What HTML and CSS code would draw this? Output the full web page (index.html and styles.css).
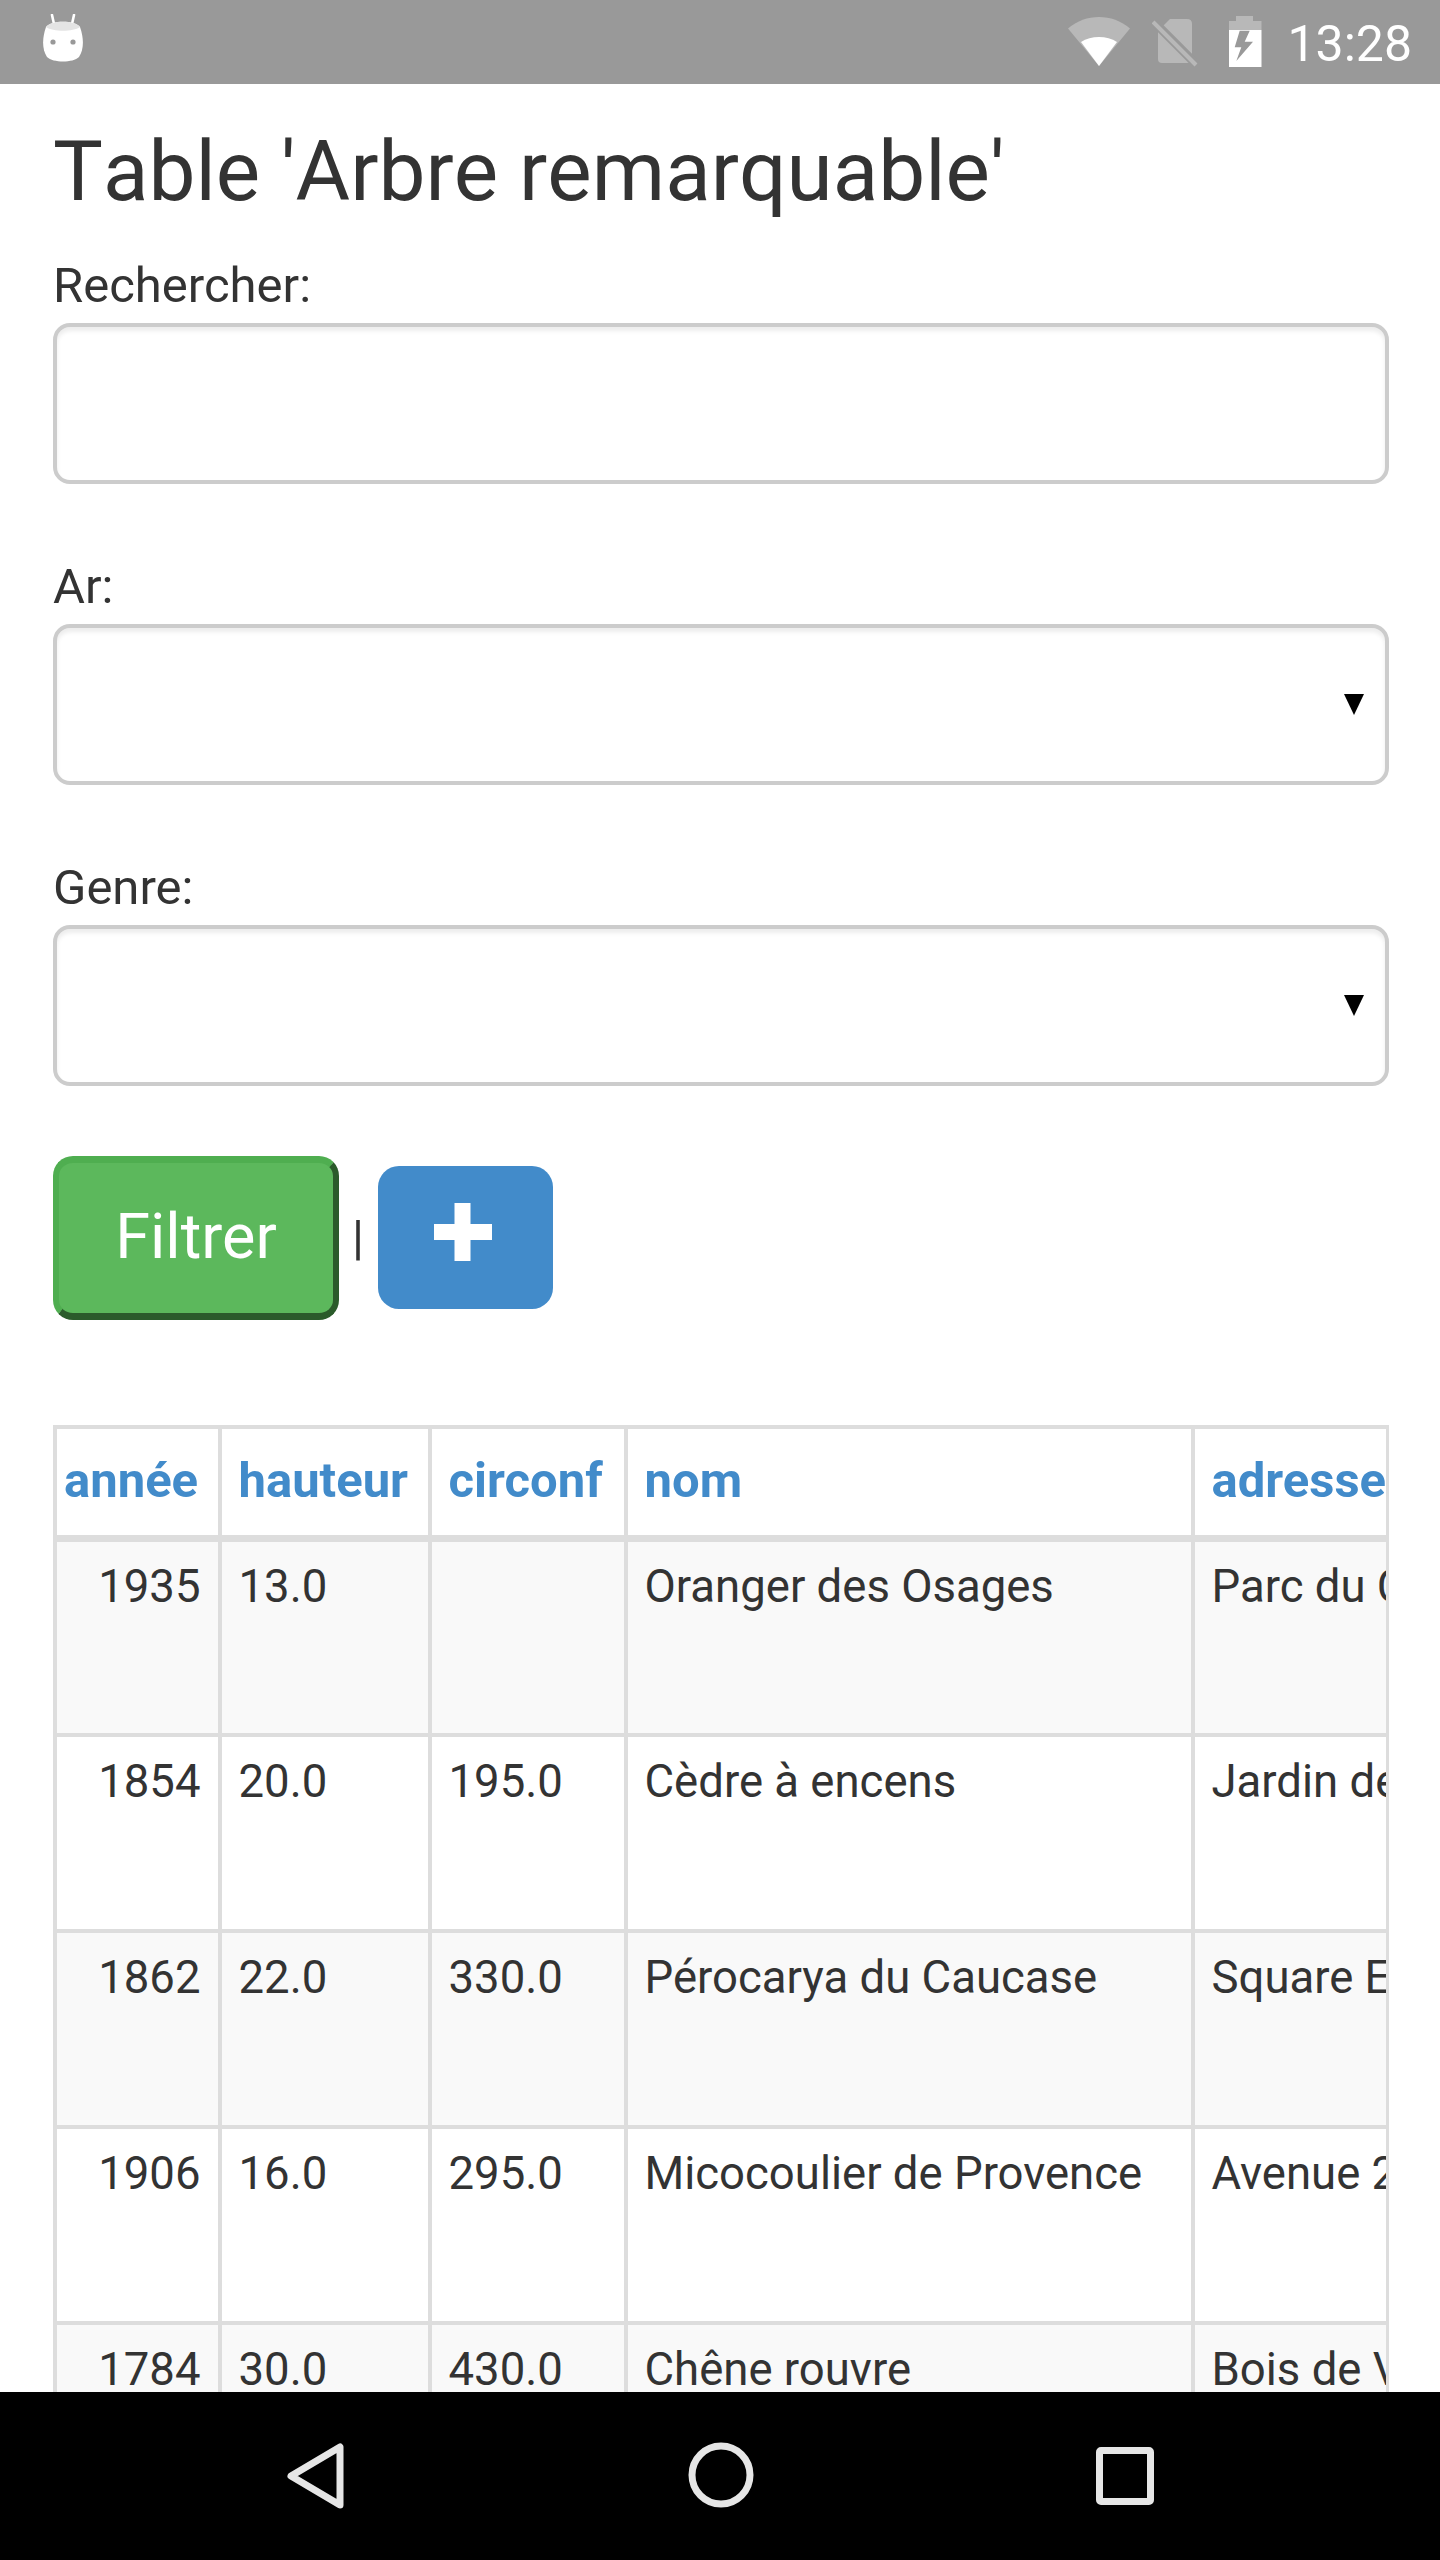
FILE: index.html
```html
<!DOCTYPE html>
<html lang="fr">
<head>
    <meta charset="UTF-8">
    <meta name="viewport" content="width=device-width, initial-scale=1.0">
    <title>Table 'Arbre remarquable'</title>
    <link rel="stylesheet" href="styles.css">
</head>
<body>
    <div class="screen">
        <div class="status-bar">
            <svg class="icon-bot" width="40" height="48" viewBox="0 0 40 48">
                <path d="M9 1l2 9M31 1l-2 9" stroke="#fff" stroke-width="2.6" stroke-linecap="round"/>
                <path d="M3 13C8 6 32 6 37 13C41 24 41 36 36 43C30 49 10 49 4 43C-1 36 -1 24 3 13Z" fill="#fff"/>
                <path d="M3 13C8 6 32 6 37 13C30 18 10 18 3 13Z" fill="#e4e4e4"/>
                <circle cx="10" cy="28" r="2.6" fill="#999"/>
                <circle cx="30" cy="28" r="2.6" fill="#999"/>
            </svg>
            <div class="status-right">
                <svg class="icon-wifi" width="62" height="49" viewBox="0 0 62 49">
                    <path d="M0 11.5C18 -3.800 44 -3.800 62 11.500L31 49Z" fill="#b8b8b8"/>
                    <path d="M13 25C23 18.300 39 18.300 49 25L31 49Z" fill="#fff"/>
                </svg>
                <svg class="icon-sim" width="46" height="48" viewBox="0 0 46 48">
                    <path d="M18 0H35Q40 0 40 5V40Q40 44 35 44H10Q6 44 6 40V12Z" fill="#b8b8b8"/>
                    <path d="M0 1L46 47" stroke="#999" stroke-width="9"/>
                    <path d="M1 3L44 46" stroke="#b8b8b8" stroke-width="4"/>
                </svg>
                <svg class="icon-battery" width="33" height="51" viewBox="0 0 33 51">
                    <path d="M7 0H24V5H32.500V14H0V5H7Z" fill="#b8b8b8"/>
                    <path d="M0 14H32.500V51H0Z" fill="#fff"/>
                    <path d="M10.700 14.700H20.700L15.700 25.700H24L7.300 45L12.300 31.300H5.700Z" fill="#999"/>
                </svg>
                <span class="clock">13:28</span>
            </div>
        </div>

        <div class="content">
            <h1 class="page-title">Table 'Arbre remarquable'</h1>

            <form class="filter-form">
                <div class="form-group">
                    <label for="q">Rechercher:</label>
                    <input type="text" id="q" class="form-control">
                </div>
                <div class="form-group">
                    <label for="ar">Ar:</label>
                    <div class="select-wrap">
                        <select id="ar" class="form-control"></select>
                    </div>
                </div>
                <div class="form-group">
                    <label for="genre">Genre:</label>
                    <div class="select-wrap">
                        <select id="genre" class="form-control"></select>
                    </div>
                </div>
                <div class="form-actions">
                    <button type="submit" class="btn-filter">Filtrer</button>
                    <span class="separator">|</span>
                    <a class="btn-add" href="#">
                        <svg width="58" height="58" viewBox="0 0 58 58">
                            <path d="M20.500 0H36.500V21H58V37H36.500V58H20.500V37H0V21H20.500Z" fill="#fff"/>
                        </svg>
                    </a>
                </div>
            </form>

            <div class="table-wrap">
                <table class="data-table">
                    <colgroup>
                        <col class="col-annee">
                        <col class="col-hauteur">
                        <col class="col-circonf">
                        <col class="col-nom">
                        <col class="col-adresse">
                    </colgroup>
                    <thead>
                        <tr>
                            <th class="th-annee">année</th>
                            <th>hauteur</th>
                            <th>circonf</th>
                            <th>nom</th>
                            <th>adresse</th>
                        </tr>
                    </thead>
                    <tbody>
                        <tr>
                            <td class="num">1935</td>
                            <td>13.0</td>
                            <td></td>
                            <td>Oranger des Osages</td>
                            <td>Parc du Champ de Mars</td>
                        </tr>
                        <tr>
                            <td class="num">1854</td>
                            <td>20.0</td>
                            <td>195.0</td>
                            <td>Cèdre à encens</td>
                            <td>Jardin des Plantes</td>
                        </tr>
                        <tr>
                            <td class="num">1862</td>
                            <td>22.0</td>
                            <td>330.0</td>
                            <td>Pérocarya du Caucase</td>
                            <td>Square Edouard VII</td>
                        </tr>
                        <tr>
                            <td class="num">1906</td>
                            <td>16.0</td>
                            <td>295.0</td>
                            <td>Micocoulier de Provence</td>
                            <td>Avenue 2 Septembre</td>
                        </tr>
                        <tr>
                            <td class="num">1784</td>
                            <td>30.0</td>
                            <td>430.0</td>
                            <td>Chêne rouvre</td>
                            <td>Bois de Vincennes</td>
                        </tr>
                    </tbody>
                </table>
            </div>
        </div>

        <div class="nav-bar">
            <svg width="60" height="68" viewBox="0 0 60 68">
                <path d="M54 5V63L5 34Z" fill="none" stroke="#e6e6e6" stroke-width="7" stroke-linejoin="round"/>
            </svg>
            <svg width="66" height="66" viewBox="0 0 66 66">
                <circle cx="33" cy="33" r="29" fill="none" stroke="#e6e6e6" stroke-width="7"/>
            </svg>
            <svg class="nav-square" width="58" height="58" viewBox="0 0 58 58">
                <rect x="3.500" y="3.500" width="51" height="51" rx="1.500" fill="none" stroke="#e6e6e6" stroke-width="7"/>
            </svg>
        </div>
    </div>
</body>
</html>
```

FILE: styles.css
```css
html, body {
    margin: 0;
    padding: 0;
}

body {
    font-family: 'Roboto', sans-serif;
    font-size: 49px;
    line-height: 70px;
    color: #333;
    background-color: #fff;
}

.screen {
    display: flex;
    flex-direction: column;
    height: 2560px;
    overflow: hidden;
}

/* status bar */
.status-bar {
    flex: none;
    height: 84px;
    background-color: #999;
    display: flex;
    align-items: flex-start;
    justify-content: space-between;
    padding: 0 28px 0 43px;
}

.icon-bot {
    margin-top: 14px;
}

.status-right {
    display: flex;
    align-items: flex-start;
}

.icon-wifi {
    margin-top: 17px;
}

.icon-sim {
    margin-top: 19px;
    margin-left: 22px;
}

.icon-battery {
    margin-top: 16px;
    margin-left: 31px;
}

.clock {
    margin-top: 9px;
    margin-left: 25px;
    color: #fff;
    font-size: 50px;
    line-height: 70px;
}

/* page */
.content {
    flex: 1;
    min-height: 0;
    padding: 0 51px 0 53px;
    overflow: hidden;
}

.page-title {
    margin: 41px 0 0;
    font-size: 83.7px;
    line-height: 92px;
    font-weight: 400;
    font-kerning: none;
}

.filter-form {
    margin-top: 33px;
}

.form-group {
    margin-bottom: 67.5px;
}

.form-group label {
    display: block;
    height: 71px;
    line-height: 71px;
    margin-bottom: 2px;
}

.form-control {
    display: block;
    box-sizing: border-box;
    width: 100%;
    height: 160.5px;
    margin: 0;
    padding: 0 42px;
    font-family: inherit;
    font-size: 49px;
    color: #555;
    background-color: #fff;
    border: 4px solid #ccc;
    border-radius: 17px;
    box-shadow: inset 0 4px 4px rgba(0, 0, 0, 0.075);
    appearance: none;
}

.select-wrap {
    position: relative;
}

.select-wrap::after {
    content: "";
    position: absolute;
    top: 70px;
    right: 25px;
    border-style: solid;
    border-width: 21px 10.5px 0;
    border-color: #000 transparent transparent;
}

.form-actions {
    display: flex;
    align-items: center;
    padding-top: 2.5px;
}

.btn-filter {
    box-sizing: border-box;
    width: 286px;
    height: 164px;
    padding: 0 0 3px;
    font-family: inherit;
    font-size: 63px;
    color: #fff;
    background-color: #5cb85c;
    border-style: solid;
    border-width: 7px 6px 7px 6px;
    border-color: #4fae50 #2b5b2b #2b5b2b #4fae50;
    border-radius: 20px;
}

.separator {
    margin-left: 13px;
    margin-right: 14px;
}

.btn-add {
    box-sizing: border-box;
    width: 175px;
    height: 143px;
    padding: 0 5px 11px 0;
    display: flex;
    align-items: center;
    justify-content: center;
    background-color: #428bca;
    border-radius: 21px;
}

/* table */
.table-wrap {
    margin-top: 105.5px;
    border-right: 3px solid #ddd;
    overflow: hidden;
}

.data-table {
    table-layout: fixed;
    width: 1634px;
    border-collapse: collapse;
}

.col-annee { width: 164.5px; }
.col-hauteur { width: 210px; }
.col-circonf { width: 196px; }
.col-nom { width: 567px; }
.col-adresse { width: 497px; }

.data-table th,
.data-table td {
    border: 4px solid #ddd;
    padding: 0 17px;
    text-align: left;
    white-space: nowrap;
    overflow: hidden;
}

.data-table th {
    height: 103px;
    padding-bottom: 3px;
    color: #428bca;
    font-weight: 700;
    border-bottom-width: 7px;
}

.data-table th.th-annee {
    padding-left: 7px;
    padding-right: 0;
}

.data-table td {
    height: 196px;
    padding-top: 12px;
    font-size: 45.5px;
    line-height: 65px;
    vertical-align: top;
    box-sizing: border-box;
}

.data-table td.num {
    text-align: right;
}

.data-table tbody tr:nth-child(odd) td {
    background-color: #f9f9f9;
}

/* nav bar */
.nav-bar {
    flex: none;
    box-sizing: border-box;
    height: 168px;
    background-color: #000;
    display: flex;
    align-items: flex-start;
    padding: 50px 0 0 286px;
    gap: 342px;
}

.nav-square {
    margin-top: 5px;
}
```
